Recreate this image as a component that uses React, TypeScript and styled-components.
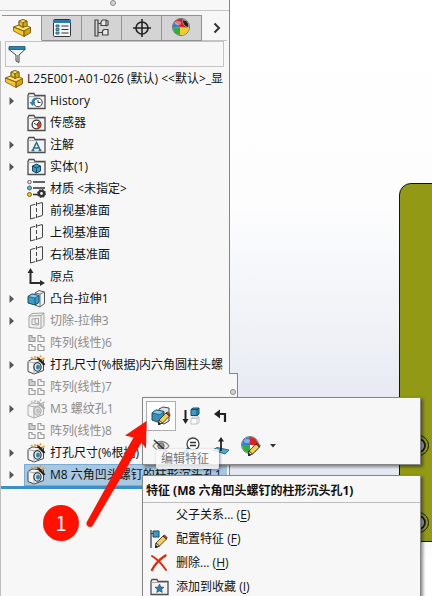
import React from "react";
import styled, { createGlobalStyle, css } from "styled-components";

const GlobalStyle = createGlobalStyle`
  * { box-sizing: border-box; }
  body {
    margin: 0;
    color: #111;
    font-family: "Open Sans", "Noto Sans CJK SC", sans-serif;
    font-size: 12px;
    line-height: 22px;
  }
  button, input { font: inherit; color: inherit; }
  button { padding: 0; border: 0; background: none; cursor: pointer; }
  svg { display: block; flex: none; }
`;

/* ---------- layout ---------- */

const Workspace = styled.div`
  position: relative;
  display: flex;
  height: 100vh;
  overflow: hidden;
  background: #fff;
`;

const FeaturePanel = styled.aside`
  flex: none;
  display: flex;
  flex-direction: column;
  width: 230px;
  background: #f7f7f7;
  border-right: 1px solid #858585;
`;

const PanelTop = styled.div`
  display: flex;
  justify-content: center;
  flex: none;
  height: 11px;
  padding-right: 4px;
  border-bottom: 1px solid #c3c3c3;
`;

const GripDot = styled.span`
  width: 6px;
  height: 6px;
  border: 1px solid #8d8d8d;
  border-radius: 50%;
  background: #d2d2d2;
`;

const TabBar = styled.div`
  display: flex;
  flex: none;
  height: 30px;
  margin-top: 4px;
  padding: 0 2px;
`;

const Tab = styled.button<{ $active?: boolean }>`
  display: grid;
  place-items: center;
  width: 40px;
  height: 26px;
  border-top: 1px solid #929292;
  border-right: 1px solid #929292;
  border-bottom: 1px solid ${(p) => (p.$active ? "#f7f7f7" : "#929292")};
  background: ${(p) => (p.$active ? "#f7f7f7" : "#d4d4d4")};
`;

const MoreTabs = styled.button`
  display: grid;
  place-items: center;
  flex: 1;
  height: 26px;
  padding-left: 4px;
  border-bottom: 1px solid #c3c3c3;
`;

const PanelBody = styled.div`
  flex: 1;
  margin-top: -4px;
  border-left: 1px solid #bdbdbd;
  min-width: 0;
`;

const FilterBox = styled.label`
  display: flex;
  align-items: center;
  height: 26px;
  margin: 0 5px 0 4px;
  padding-left: 2px;
  border: 1px solid #c3c3c3;
`;

const FilterInput = styled.input`
  flex: 1;
  min-width: 0;
  height: 22px;
  border: 0;
  outline: 0;
  background: transparent;
`;

const Tree = styled.ul`
  list-style: none;
  margin: 0;
  padding: 1px 2px 0 0;
  border-bottom: 3px solid #3a91c8;
`;

const RootRow = styled.li`
  display: flex;
  align-items: center;
  gap: 4px;
  height: 22px;
  padding-left: 4px;
  overflow: hidden;
  white-space: pre;
`;

const Row = styled.li<{ $dim?: boolean }>`
  display: flex;
  height: 22px;
  color: ${(p) => (p.$dim ? "#8b8b8b" : "#111")};
`;

const Expander = styled.button`
  display: grid;
  place-items: center;
  flex: none;
  width: 23px;
  padding-right: 2px;
`;

const NoExpander = styled.span`
  flex: none;
  width: 23px;
`;

const RowMain = styled.span<{ $selected?: boolean }>`
  flex: 1;
  display: flex;
  align-items: center;
  gap: 4px;
  min-width: 0;
  padding-left: 2px;
  overflow: hidden;
  white-space: nowrap;
  border: 1px solid transparent;
  border-right: 0;
  ${(p) =>
    p.$selected &&
    css`
      background: #a7c8e3;
      border-color: #79acd4;
    `}
`;

const Viewport = styled.main`
  position: relative;
  flex: 1;
  background: linear-gradient(#fff 0%, #fdfdfe 35%, #e8ebf3 66%, #e6e9f2 84%, #fff 94%);
`;

/* ---------- items on the drawing surface ---------- */

const ModelPlate = styled.div`
  position: absolute;
  left: 169px;
  right: -20px;
  top: 183px;
  height: 359px;
  border: 1px solid #15150a;
  border-top-left-radius: 12px;
  background: #929914;
`;

const HoleRing = styled.span<{ $top: number }>`
  position: absolute;
  left: 8px;
  top: ${(p) => p.$top}px;
  display: grid;
  place-items: center;
  width: 21px;
  height: 21px;
  border: 1px solid #111;
  border-radius: 50%;
  &::after {
    content: "";
    width: 11px;
    height: 11px;
    border: 2px solid #1c1c1c;
    border-radius: 50%;
    background: #a3a8ad;
  }
`;

const SplitHandle = styled.div`
  position: absolute;
  left: 229px;
  top: 373px;
  display: flex;
  align-items: flex-end;
  justify-content: center;
  width: 9px;
  height: 24px;
  padding-bottom: 2px;
  background: #f7f7f7;
  border-top: 1px solid #858585;
  border-right: 1px solid #858585;
`;

const popup = css`
  position: absolute;
  left: 142px;
  background: #f7f7f7;
  border: 1px solid #868686;
  box-shadow: 2px 2px 3px rgba(0, 0, 0, 0.45);
`;

const ContextToolbar = styled.div`
  ${popup}
  top: 397px;
  display: flex;
  flex-direction: column;
  width: 279px;
  height: 68px;
  padding: 3px;
`;

const ToolRow = styled.div`
  display: flex;
  height: 30px;
`;

const Tool = styled.button<{ $framed?: boolean }>`
  display: grid;
  place-items: center;
  width: 30px;
  height: 30px;
  background: ${(p) => (p.$framed ? "#fff" : "transparent")};
  border: 1px solid ${(p) => (p.$framed ? "#adadad" : "transparent")};
`;

const DropTool = styled(Tool)`
  width: 14px;
`;

const ContextMenu = styled.div`
  ${popup}
  top: 475px;
  width: 279px;
  padding-bottom: 24px;
`;

const MenuTitle = styled.div`
  height: 27px;
  padding: 4px 3px 0;
  border-bottom: 1px solid #bdbdbd;
  font-weight: 700;
  white-space: nowrap;
`;

const MenuItem = styled.button`
  display: flex;
  align-items: center;
  gap: 8px;
  width: 100%;
  height: 24px;
  padding-left: 7px;
  text-align: left;
`;

const IconSlot = styled.span`
  display: grid;
  place-items: center;
  flex: none;
  width: 18px;
  height: 18px;
`;

const AccessKey = styled.u`
  text-underline-offset: 2px;
`;

const Tooltip = styled.div`
  position: absolute;
  left: 156px;
  top: 449px;
  height: 20px;
  padding: 0 10px 0 5px;
  line-height: 19px;
  border-radius: 2px;
  color: #777;
  background: rgba(250, 250, 250, 0.82);
  box-shadow: 1px 1px 3px rgba(0, 0, 0, 0.4);
`;

const StepBadge = styled.div`
  position: absolute;
  left: 43px;
  top: 505px;
  width: 36px;
  height: 36px;
  border-radius: 50%;
  background: #ff1100;
  color: #fff;
  font-size: 20px;
  line-height: 36px;
  text-align: center;
  font-family: "Noto Sans CJK SC", sans-serif;
`;

const Pointer = styled.svg`
  position: absolute;
  left: 80px;
  top: 415px;
`;

/* ---------- icons ---------- */

const PartIcon = ({ size = 18 }: { size?: number }) => (
  <svg width={size} height={size} viewBox="0 0 18 18" stroke="#7a5f12" strokeLinejoin="round" strokeWidth=".8">
    <path d="M6 2l4-1.500L14 2v5l3.500 1.500v5L11 17.500.5 12V8L6 6z" fill="#f6c62a" />
    <path d="M6 2l4-1.500L14 2l-4 1.800zM.5 8L6 6l4 2 4-1 3.500 1.500L11 12z" fill="#ffe272" />
    <path d="M10 3.800L14 2v5l-4 1.500zM11 12l6.500-3.500v5L11 17.500z" fill="#dba318" />
    <path d="M6 2v4.500l4 2V3.800M.5 8L11 12v5.500" fill="none" />
  </svg>
);

const ListIcon = () => (
  <svg width="18" height="18" viewBox="0 0 18 18">
    <rect x=".5" y=".5" width="17" height="17" rx="1" fill="#f2f6f8" stroke="#333" />
    <path d="M0 1h18v3H0z" fill="#2f7aa0" />
    <path d="M8.500 7h7M8.500 10.500h7M8.500 14h7" stroke="#333" strokeWidth="1.200" />
    <path d="M3 6h3v2H3zM3 9.500h3v2H3zM3 13h3v2H3z" fill="#65b5d7" stroke="#1c526f" strokeWidth=".8" />
  </svg>
);

const ConfigIcon = () => (
  <svg width="16" height="18" viewBox="0 0 16 18" fill="none" stroke="#444" strokeWidth="1.200">
    <path d="M1 1h3v16H1zM4 4.500h3M4 13.500h4" />
    <path d="M7 3l1.500-2H12v5.500H7zM8.500 12l1.500-1.500h4V16H8.500zM12 1l2 1v4l-2 1" fill="#e9e9e9" />
  </svg>
);

const TargetIcon = () => (
  <svg width="18" height="18" viewBox="0 0 18 18" fill="none" stroke="#222" strokeWidth="1.600">
    <circle cx="9" cy="9" r="6" />
    <path d="M9 0v18M0 9h18" />
  </svg>
);

const Ball = ({ pencil }: { pencil?: boolean }) => (
  <svg width="20" height="20" viewBox="0 0 20 20">
    <circle cx="9" cy="9" r="8.500" fill="#e9e9e9" stroke="#555" strokeWidth=".8" />
    {pencil ? (
      <>
        <path d="M9 9V1a8 8 0 00-8 8z" fill="#2f7fd6" />
        <path d="M9 9V1a8 8 0 018 8z" fill="#dc2222" />
        <path d="M1 9h8v8a8 8 0 01-8-8z" fill="#2eae3a" />
        <path d="M9 9h8a8 8 0 01-8 8z" fill="#fff" />
      </>
    ) : (
      <>
        <path d="M8 9L3 3.500A8 8 0 001 10z" fill="#2f7fd6" />
        <path d="M8 9L3 3.500A8 8 0 0112 1.500l3 8.500z" fill="#dc2222" />
        <path d="M8 9l-7 1a8 8 0 007 7z" fill="#2eae3a" />
        <path d="M8 9l9 1a8 8 0 01-9 7z" fill="#f3cb2e" />
      </>
    )}
    <ellipse cx="6" cy="5" rx="3" ry="2" fill="#fff" opacity=".4" />
    {pencil ? (
      <Pencil x={7} y={7} />
    ) : (
      <path d="M10.500 2c4-.5 7 3 6 7.500-3.500-.5-6-3.500-6-7.500z" fill="#222" stroke="#aaa" strokeWidth=".8" />
    )}
  </svg>
);

const Pencil = ({ x, y }: { x: number; y: number }) => (
  <g transform={`translate(${x} ${y})`} stroke="#222" strokeWidth=".8" strokeLinejoin="round">
    <path d="M1 8l7-7 3.500 3L4.500 11 .5 12.500z" fill="#f7cf4c" />
    <path d="M8 1l1.500-1L12 2.500 11.500 4z" fill="#e23a2e" />
    <path d="M1 8L.5 12.500 4.500 11z" fill="#eee3c8" />
    <path d="M.5 12.500l.4-2 1.600 1.400z" fill="#111" />
  </g>
);

const FunnelIcon = () => (
  <svg width="18" height="18" viewBox="0 0 18 18">
    <path d="M1 3.500h16v1L11 10v7.500L8 16v-6L1 4.500z" fill="#eef2f4" stroke="#444" />
    <path d="M1 1.500h16v3H1z" fill="#2786b4" stroke="#1c5270" strokeWidth=".8" />
    <path d="M9.500 10v6" stroke="#999" />
  </svg>
);

const Folder = ({ children }: { children: React.ReactNode }) => (
  <svg width="19" height="18" viewBox="0 0 19 18">
    <path d="M1 16.500v-13l1-2h5l1 2h10v13z" fill="#f3f3f3" stroke="#4e4e4e" strokeWidth="1.300" />
    <path d="M1.500 4.500H17" stroke="#aaa" />
    {children}
  </svg>
);

const HistoryIcon = () => (
  <Folder>
    <circle cx="11" cy="10.500" r="4.200" fill="#fff" stroke="#444" strokeWidth="1.100" />
    <path d="M11 8v2.500h2.500" fill="none" stroke="#333" />
    <path d="M10 6.500C6 6.500 5.500 9 5.500 11" fill="none" stroke="#2a83ab" strokeWidth="2" />
    <path d="M2.500 10h6l-3 4z" fill="#2a83ab" />
  </Folder>
);

const SensorIcon = () => (
  <Folder>
    <circle cx="9.500" cy="10.500" r="4.400" fill="#fff" stroke="#333" strokeWidth="1.300" />
    <path d="M9.500 10.500l3-3 1.500 4-3 3.500z" fill="#e2401f" />
    <path d="M7 9l2.500 2L12 8" fill="none" stroke="#333" />
  </Folder>
);

const NoteIcon = () => (
  <Folder>
    <path d="M5.500 14.500L9.500 6.500l4 8M7 12h5M4.500 14.500h3M11.500 14.500h3" fill="none" stroke="#2b6c8f" strokeWidth="1.500" />
  </Folder>
);

const SolidIcon = () => (
  <Folder>
    <path d="M5.500 8l4-2 4 2v5l-4 2-4-2z" fill="#3b9ac4" stroke="#174a64" />
    <path d="M5.500 8l4 2 4-2M9.500 10v5" fill="none" stroke="#174a64" />
  </Folder>
);

const StarFolderIcon = () => (
  <Folder>
    <path d="M9.500 6l1.300 3 3.200.3-2.400 2.100.7 3.100-2.800-1.600-2.800 1.600.7-3.100L5 9.300 8.200 9z" fill="#2d7fa8" stroke="#174a64" strokeWidth=".6" />
  </Folder>
);

const MaterialIcon = () => (
  <svg width="19" height="18" viewBox="0 0 19 18">
    <path d="M6 2h12M6 8h12M6 14.500h6" stroke="#333" strokeWidth="1.600" />
    <circle cx="2.500" cy="2" r="1.700" fill="#fff" stroke="#555" />
    <circle cx="2.500" cy="8" r="2" fill="#55bce0" stroke="#396575" />
    <circle cx="2.500" cy="14.500" r="2" fill="#ffc61a" stroke="#806010" />
    <circle cx="14.500" cy="13.500" r="2.600" fill="none" stroke="#333" strokeWidth="2.400" />
    <circle cx="14.500" cy="13.500" r="3.800" fill="none" stroke="#333" strokeWidth="1.300" strokeDasharray="1.600 1.380" />
  </svg>
);

const PlaneIcon = () => (
  <svg width="19" height="18" viewBox="0 0 19 18" fill="none" stroke="#444">
    <path d="M3.500 3.500v13.500M15.500.5v13" />
    <path d="M9.500 0v18" strokeDasharray="4 2" />
    <path d="M3.500 3.500l12-3M3.500 17l12-3.500" strokeDasharray="5 2" />
  </svg>
);

const OriginIcon = () => (
  <svg width="19" height="18" viewBox="0 0 19 18">
    <path d="M3.500 4v11H14" fill="none" stroke="#2c2c2c" strokeWidth="2" />
    <path d="M3.500 0L.5 5h6zM18 15l-5-3v6z" fill="#2c2c2c" />
  </svg>
);

const BossIcon = () => (
  <svg width="19" height="18" viewBox="0 0 19 18" strokeLinejoin="round">
    <path d="M8 3l4-2.500L17.500 2v11.500L13 17l-5-2z" fill="#f2f2f2" stroke="#555" />
    <path d="M13 4v13M13 4l4.500-2M8 3l5 1" fill="none" stroke="#777" />
    <path d="M1 6.500L5 4l7 1.500v7L8 15l-7-2z" fill="#3f9cc6" stroke="#174a64" />
    <path d="M1 6.500L8 8l4-2.500L5 4z" fill="#8ccbe5" stroke="#174a64" strokeWidth=".7" />
    <path d="M8 8v7" stroke="#174a64" strokeWidth=".8" />
  </svg>
);

const CutIcon = () => (
  <svg width="19" height="18" viewBox="0 0 19 18" fill="#eee" stroke="#a5a5a5" strokeLinejoin="round">
    <path d="M2 4l3-2.500L17 1v12.500L14 16.500 2 15.500z" />
    <path d="M2 4l12-.5v13M14 3.500L17 1M5 7l6.500-.5v6.500L5 12.500zM8 7v4l3.500 1" />
  </svg>
);

const PatternIcon = () => (
  <svg width="19" height="18" viewBox="0 0 19 18" fill="#f7f7f7" stroke="#9c9c9c" strokeWidth="1.200">
    <path d="M2 1.500h3v2h3v4H2z" fill="#cfcfcf" />
    <path d="M11 1.500h3v2h3v4h-6zM2 10.500h3v2h3v4H2zM11 10.500h3v2h3v4h-6z" />
  </svg>
);

const HoleIcon = ({ dim }: { dim?: boolean }) => {
  const line = dim ? "#aaa" : "#222";
  return (
    <svg width="19" height="20" viewBox="0 0 19 20" strokeLinejoin="round">
      <path d="M1 6.500L5 4l11.500 1v10.500L7 19l-6-2.500z" fill="#f4f4f4" stroke={dim ? "#aaa" : "#444"} />
      <path d="M1 6.500l6 1.300V19M7 7.800l6-1.300" stroke="#aaa" fill="none" />
      <ellipse cx="10.500" cy="12" rx="3.600" ry="4.200" fill={dim ? "#ddd" : "#d5ecf5"} stroke={line} strokeWidth="1.100" />
      <ellipse cx="11" cy="12" rx="2" ry="2.600" fill={dim ? "#c4c4c4" : "#2f82ab"} />
      <path d="M11 3l6.500 7" stroke={line} strokeWidth="2.400" />
      <path d="M4 3l1.500-1M8 3V1M6.500 4.500l1-1M13 2l1-1.500M15.500 4l2-1" stroke={dim ? "#b5b5b5" : "#ed9a16"} strokeWidth="1.500" />
      <path d="M10 2l1.500 1.600" stroke={dim ? "#bbb" : "#c8401b"} strokeWidth="1.600" />
    </svg>
  );
};

const EditFeatureIcon = () => (
  <svg width="20" height="20" viewBox="0 0 20 20" strokeLinejoin="round">
    <path d="M8 3l4-2 6 1v13l-5 3-5-2z" fill="#e5e5e5" stroke="#444" />
    <path d="M1 7l4-3 8 1.500v8L9 17l-8-3z" fill="#378fb9" stroke="#174a64" />
    <path d="M1 7l8 1.500 4-3L5 4z" fill="#8ccbe5" stroke="#174a64" strokeWidth=".7" />
    <Pencil x={7} y={6} />
  </svg>
);

const RollbackIcon = () => (
  <svg width="18" height="18" viewBox="0 0 18 18">
    <path d="M3.500 3v10" stroke="#222" strokeWidth="2" />
    <path d="M.5 12h6l-3 5z" fill="#222" />
    <path d="M9 2.500L11 1h6v6l-2 1.500H9z" fill="#3f9cc6" stroke="#174a64" />
    <path d="M9 2.500h6l2-1.500M15 2.500v6" fill="none" stroke="#174a64" />
    <path d="M9 11.500l2-1.500h6v5.500L15 17H9zM9 11.500h6v5.500M15 11.500l2-1.500" fill="#fff" stroke="#c2c2c2" />
  </svg>
);

const SuppressIcon = () => (
  <svg width="16" height="16" viewBox="0 0 16 16">
    <path d="M5 6h7v8" fill="none" stroke="#222" strokeWidth="2.200" />
    <path d="M1 6l6-4.500v9z" fill="#222" />
  </svg>
);

const HideIcon = () => (
  <svg width="18" height="18" viewBox="0 0 18 18" fill="none">
    <path d="M1 9c4-6 12-6 16 0-4 6-12 6-16 0z" fill="#eee" stroke="#888" strokeWidth="1.300" />
    <circle cx="9" cy="9" r="3.200" fill="#999" stroke="#666" />
    <path d="M2 3l13 12" stroke="#333" strokeWidth="1.500" />
  </svg>
);

const ZoomIcon = () => (
  <svg width="18" height="18" viewBox="0 0 18 18">
    <path d="M6.500 11L1 17" stroke="#2f82ab" strokeWidth="2.500" />
    <circle cx="11" cy="7" r="6" fill="#fff" stroke="#444" strokeWidth="1.300" />
    <path d="M8 5.500h6M8 8.500h6" stroke="#333" strokeWidth="1.600" />
  </svg>
);

const NormalIcon = () => (
  <svg width="18" height="20" viewBox="0 0 18 20">
    <path d="M1 14l4-2.500L17 14l-4 4z" fill="#54a9cf" stroke="#276c8d" />
    <path d="M9 4v11" stroke="#222" strokeWidth="1.800" />
    <path d="M9 1L6 5.500h6z" fill="#222" />
  </svg>
);

const ConfigureIcon = () => (
  <svg width="18" height="18" viewBox="0 0 18 18">
    <path d="M1 0v18M1 3.500h2" stroke="#333" strokeWidth="1.200" />
    <path d="M3 1h6v6H3z" fill="#3f9cc6" stroke="#174a64" />
    <Pencil x={5} y={5} />
  </svg>
);

const DeleteIcon = () => (
  <svg width="18" height="18" viewBox="0 0 18 18" fill="none" stroke="#dc2b10" strokeLinecap="round">
    <path d="M2 2c5 3 10 8 14 14" strokeWidth="2" />
    <path d="M15.500 1.500C10 5 5 10 2 16" strokeWidth="2.400" />
  </svg>
);

/* ---------- content ---------- */

type TreeNode = {
  label: string;
  icon: React.ReactNode;
  expandable?: boolean;
  dim?: boolean;
  selected?: boolean;
};

const nodes: TreeNode[] = [
  { label: "History", icon: <HistoryIcon />, expandable: true },
  { label: "传感器", icon: <SensorIcon /> },
  { label: "注解", icon: <NoteIcon />, expandable: true },
  { label: "实体(1)", icon: <SolidIcon />, expandable: true },
  { label: "材质 <未指定>", icon: <MaterialIcon /> },
  { label: "前视基准面", icon: <PlaneIcon /> },
  { label: "上视基准面", icon: <PlaneIcon /> },
  { label: "右视基准面", icon: <PlaneIcon /> },
  { label: "原点", icon: <OriginIcon /> },
  { label: "凸台-拉伸1", icon: <BossIcon />, expandable: true },
  { label: "切除-拉伸3", icon: <CutIcon />, expandable: true, dim: true },
  { label: "阵列(线性)6", icon: <PatternIcon />, dim: true },
  { label: "打孔尺寸(%根据)内六角圆柱头螺", icon: <HoleIcon />, expandable: true },
  { label: "阵列(线性)7", icon: <PatternIcon />, dim: true },
  { label: "M3 螺纹孔1", icon: <HoleIcon dim />, expandable: true, dim: true },
  { label: "阵列(线性)8", icon: <PatternIcon />, dim: true },
  { label: "打孔尺寸(%根据)", icon: <HoleIcon />, expandable: true },
  { label: "M8 六角凹头螺钉的柱形沉头孔1", icon: <HoleIcon />, expandable: true, selected: true },
];

const tabs = [
  { label: "特征树", icon: <PartIcon /> },
  { label: "属性", icon: <ListIcon /> },
  { label: "配置", icon: <ConfigIcon /> },
  { label: "尺寸", icon: <TargetIcon /> },
  { label: "外观", icon: <Ball /> },
];

const menuItems = [
  { label: "父子关系...", accessKey: "E", icon: null },
  { label: "配置特征", accessKey: "F", icon: <ConfigureIcon /> },
  { label: "删除...", accessKey: "H", icon: <DeleteIcon /> },
  { label: "添加到收藏", accessKey: "I", icon: <StarFolderIcon /> },
];

export default function App() {
  return (
    <>
      <GlobalStyle />
      <Workspace>
        <FeaturePanel>
          <PanelTop>
            <GripDot />
          </PanelTop>
          <TabBar role="tablist">
            {tabs.map((tab, i) => (
              <Tab key={tab.label} role="tab" aria-label={tab.label} aria-selected={i === 0} $active={i === 0}>
                {tab.icon}
              </Tab>
            ))}
            <MoreTabs aria-label="更多">
              <svg width="8" height="12" viewBox="0 0 8 12" fill="none" stroke="#333" strokeWidth="2">
                <path d="M1.500 1.500L6 6l-4.500 4.500" />
              </svg>
            </MoreTabs>
          </TabBar>
          <PanelBody>
            <FilterBox>
              <FunnelIcon />
              <FilterInput type="text" aria-label="过滤" />
            </FilterBox>
            <Tree>
              <RootRow>
                <PartIcon />
                L25E001-A01-026 (默认) &lt;&lt;默认&gt;_显
              </RootRow>
              {nodes.map((node) => (
                <Row key={node.label} $dim={node.dim}>
                  {node.expandable ? (
                    <Expander aria-label="展开">
                      <svg width="5" height="8" viewBox="0 0 5 8">
                        <path d="M.5 0L5 4 .5 8z" fill="#555" />
                      </svg>
                    </Expander>
                  ) : (
                    <NoExpander />
                  )}
                  <RowMain $selected={node.selected}>
                    {node.icon}
                    {node.label}
                  </RowMain>
                </Row>
              ))}
            </Tree>
          </PanelBody>
        </FeaturePanel>

        <Viewport>
          <ModelPlate>
            <HoleRing $top={251} />
            <HoleRing $top={328} />
          </ModelPlate>
        </Viewport>

        <SplitHandle>
          <GripDot />
        </SplitHandle>

        <ContextMenu role="menu">
          <MenuTitle>特征 (M8 六角凹头螺钉的柱形沉头孔1)</MenuTitle>
          {menuItems.map((item) => (
            <MenuItem key={item.accessKey} role="menuitem">
              <IconSlot>{item.icon}</IconSlot>
              <span>
                {item.label} (<AccessKey>{item.accessKey}</AccessKey>)
              </span>
            </MenuItem>
          ))}
        </ContextMenu>

        <ContextToolbar role="toolbar">
          <ToolRow>
            <Tool aria-label="编辑特征" $framed>
              <EditFeatureIcon />
            </Tool>
            <Tool aria-label="退回">
              <RollbackIcon />
            </Tool>
            <Tool aria-label="压缩">
              <SuppressIcon />
            </Tool>
          </ToolRow>
          <ToolRow>
            <Tool aria-label="隐藏">
              <HideIcon />
            </Tool>
            <Tool aria-label="放大所选范围">
              <ZoomIcon />
            </Tool>
            <Tool aria-label="正视于">
              <NormalIcon />
            </Tool>
            <Tool aria-label="外观">
              <Ball pencil />
            </Tool>
            <DropTool aria-label="外观选项">
              <svg width="6" height="4" viewBox="0 0 6 4">
                <path d="M0 0h6L3 3.500z" fill="#333" />
              </svg>
            </DropTool>
          </ToolRow>
        </ContextToolbar>

        <Tooltip role="tooltip">编辑特征</Tooltip>
        <StepBadge>1</StepBadge>
        <Pointer width="70" height="115" viewBox="0 0 70 115">
          <path
            d="M66.500 6L45 20.500l8.500 2L6.800 107a3.500 3.500 0 006 3.500L61.500 27.500l4.500 6z"
            fill="#ff1100"
          />
        </Pointer>
      </Workspace>
    </>
  );
}
